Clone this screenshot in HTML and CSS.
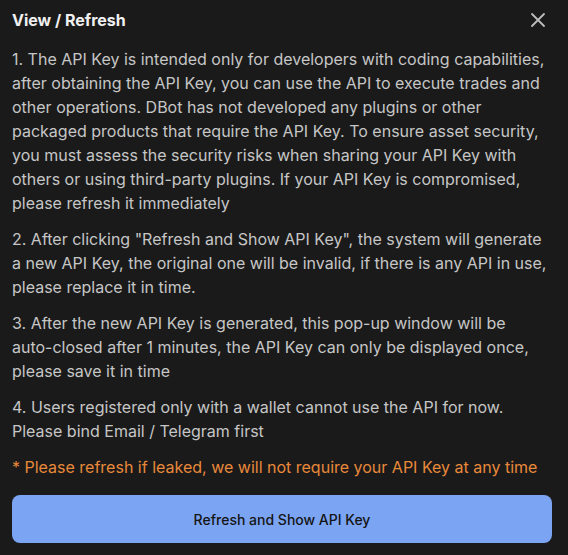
FILE: index.html
```html
<!DOCTYPE html>
<html>
<head>
<meta charset="utf-8">
<link rel="stylesheet" href="styles.css">
</head>
<body>
<div class="modal">
  <div class="header">
    <div class="title">View / Refresh</div>
    <button class="close" aria-label="Close">
      <svg width="16" height="16" viewBox="0 0 16 16"><path d="M2 2 L14 14 M14 2 L2 14" stroke="#bdbdbd" stroke-width="1.8" stroke-linecap="round"/></svg>
    </button>
  </div>
  <div class="body">
    <p>1. The API Key is intended only for developers with coding capabilities, after obtaining the API Key, you can use the API to execute trades and other operations. DBot has not developed any plugins or other packaged products that require the API Key. To ensure asset security, you must assess the security risks when sharing your API Key with others or using third-party plugins. If your API Key is compromised, please refresh it immediately</p>
    <p>2. After clicking "Refresh and Show API Key", the system will generate a new API Key, the original one will be invalid, if there is any API in use, please replace it in time.</p>
    <p>3. After the new API Key is generated, this pop-up window will be auto-closed after 1 minutes, the API Key can only be displayed once, please save it in time</p>
    <p>4. Users registered only with a wallet cannot use the API for now. Please bind Email / Telegram first</p>
    <p class="warn">* Please refresh if leaked, we will not require your API Key at any time</p>
  </div>
  <button class="primary">Refresh and Show API Key</button>
</div>
</body>
</html>
```

FILE: styles.css
```css
html, body {
  margin: 0;
  padding: 0;
  background: #1a1a1a;
}
body {
  font-family: Inter, "Noto Sans", sans-serif;
}
.modal {
  width: 568px;
  height: 555px;
  box-sizing: border-box;
  padding: 8px 16px 12px 12px;
  display: flex;
  flex-direction: column;
}
.header {
  display: flex;
  justify-content: space-between;
  align-items: center;
  height: 24px;
}
.title {
  color: #f0f0f0;
  font-weight: 700;
  font-size: 16px;
}
.close {
  background: none;
  border: none;
  padding: 0;
  margin-right: 6px;
  display: flex;
  cursor: pointer;
}
.body {
  margin-top: 15px;
  margin-right: 4px;
}
.body p {
  margin: 0 0 12px;
  color: #c6c6c6;
  font-size: 16px;
  line-height: 24px;
}
.body p.warn {
  color: #e8893a;
  margin-bottom: 16px;
  white-space: nowrap;
}
.primary {
  height: 48px;
  border: none;
  border-radius: 8px;
  background: #7ba4f2;
  color: #151515;
  font-family: Inter, sans-serif;
  font-size: 14px;
  font-weight: 500;
}
```
